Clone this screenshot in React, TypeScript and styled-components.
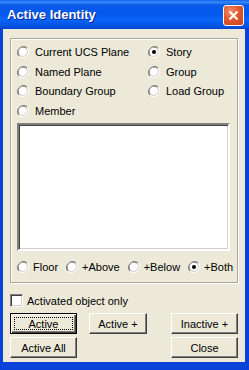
import styled, { createGlobalStyle } from "styled-components";

const Global = createGlobalStyle`
  html, body {
    margin: 0;
    padding: 0;
    background: #fff;
  }
`;

const font = `"Liberation Sans", Arial, sans-serif`;

type RadioProps = { checked?: boolean };

function RadioMark({ checked }: RadioProps) {
  return (
    <svg width="12" height="12" viewBox="0 0 12 12">
      <path d="M10.2 1.8 A6 6 0 0 0 1.8 10.2" fill="none" stroke="#808080" strokeWidth="1" />
      <path d="M9.5 2.5 A5 5 0 0 0 2.5 9.5" fill="none" stroke="#404040" strokeWidth="1" />
      <circle cx="6" cy="6" r="4.5" fill="#fff" />
      <path d="M1.8 10.2 A6 6 0 0 0 10.2 1.8" fill="none" stroke="#fff" strokeWidth="1" />
      <path d="M2.5 9.5 A5 5 0 0 0 9.5 2.5" fill="none" stroke="#d4d0c8" strokeWidth="1" />
      {checked && <circle cx="6" cy="6" r="2" fill="#000" />}
    </svg>
  );
}

function Radio({ label, checked }: { label: string; checked?: boolean }) {
  return (
    <RadioItem>
      <RadioMark checked={checked} />
      <span>{label}</span>
    </RadioItem>
  );
}

export default function App() {
  return (
    <>
      <Global />
      <Window>
        <TitleBar>
          <Title>Active Identity</Title>
          <CloseX>
            <svg width="11" height="11" viewBox="0 0 11 11">
              <path d="M1.5 1.5 L9.5 9.5 M9.5 1.5 L1.5 9.5" stroke="#fff" strokeWidth="2" />
            </svg>
          </CloseX>
        </TitleBar>
        <Frame>
          <Group>
            <OptionGrid>
              <Radio label="Current UCS Plane" />
              <Radio label="Story" checked />
              <Radio label="Named Plane" />
              <Radio label="Group" />
              <Radio label="Boundary Group" />
              <Radio label="Load Group" />
              <Radio label="Member" />
            </OptionGrid>
            <ListBox />
            <RangeRow>
              <Radio label="Floor" />
              <Radio label="+Above" />
              <Radio label="+Below" />
              <Radio label="+Both" checked />
            </RangeRow>
          </Group>
          <CheckRow>
            <CheckBox />
            <span>Activated object only</span>
          </CheckRow>
          <ButtonRow $top={6}>
            <Button $default $width={67}>
              <Focus>Active</Focus>
            </Button>
            <Button $width={58}>Active +</Button>
            <Button $width={67} $push>Inactive +</Button>
          </ButtonRow>
          <ButtonRow $top={3}>
            <Button $width={67}>Active All</Button>
            <Button $width={67} $push>Close</Button>
          </ButtonRow>
        </Frame>
      </Window>
    </>
  );
}

const Window = styled.div`
  width: 249px;
  height: 370px;
  display: flex;
  flex-direction: column;
  background: #0842d8;
  font-family: ${font};
  font-size: 11px;
  color: #000;
`;

const TitleBar = styled.div`
  height: 29px;
  flex: none;
  display: flex;
  align-items: center;
  justify-content: space-between;
  padding: 0 5px 0 7px;
  background: linear-gradient(
    to bottom,
    #0a5ff0 0px,
    #3d8cf5 2px,
    #0b5ae8 5px,
    #0358eb 12px,
    #0864f7 20px,
    #0553e0 26px,
    #0443d0 29px
  );
`;

const Title = styled.div`
  color: #fff;
  font-family: ${font};
  font-weight: bold;
  font-size: 13px;
  text-shadow: 1px 1px 0 #0a1e8c;
`;

const CloseX = styled.div`
  width: 19px;
  height: 19px;
  border: 1px solid #fff;
  border-radius: 3px;
  background: radial-gradient(circle at 35% 30%, #f0906a 0%, #e0582e 45%, #c8401c 100%);
  display: flex;
  align-items: center;
  justify-content: center;
  margin-top: 1px;
`;

const Frame = styled.div`
  flex: 1;
  margin: 0 4px 8px 3px;
  background: #ece9d8;
  display: flex;
  flex-direction: column;
  padding: 9px 7px 0 7px;
`;

const Group = styled.div`
  border: 1px solid #aca899;
  box-shadow: inset 1px 1px 0 #fff, 1px 1px 0 #fff;
  display: flex;
  flex-direction: column;
  padding: 3px 7px 0 6px;
  height: 245px;
  box-sizing: border-box;
`;

const OptionGrid = styled.div`
  display: grid;
  grid-template-columns: 131px 1fr;
  grid-auto-rows: 19.7px;
  align-items: center;
`;

const RadioItem = styled.label`
  display: flex;
  align-items: center;
  gap: 6px;
  white-space: nowrap;
  & > svg {
    flex: none;
  }
`;

const ListBox = styled.div`
  margin-top: 2px;
  height: 130px;
  box-sizing: border-box;
  background: #fff;
  border-style: solid;
  border-width: 2px;
  border-color: #808080 #fff #fff #808080;
  box-shadow: inset 1px 1px 0 #404040, inset -1px -1px 0 #d4d0c8;
`;

const RangeRow = styled.div`
  display: flex;
  align-items: center;
  height: 31px;
  gap: 8px;
  & > label {
    gap: 4px;
  }
`;

const CheckRow = styled.div`
  display: flex;
  align-items: center;
  gap: 4px;
  margin-top: 11px;
  height: 13px;
`;

const CheckBox = styled.div`
  width: 13px;
  height: 13px;
  box-sizing: border-box;
  background: #fff;
  border-style: solid;
  border-width: 1px;
  border-color: #808080 #fff #fff #808080;
  box-shadow: inset 1px 1px 0 #404040, inset -1px -1px 0 #d4d0c8;
`;

const ButtonRow = styled.div<{ $top: number }>`
  display: flex;
  gap: 12px;
  margin-top: ${(p) => p.$top}px;
`;

const Button = styled.div<{ $default?: boolean; $width: number; $push?: boolean }>`
  width: ${(p) => p.$width}px;
  height: 21px;
  box-sizing: border-box;
  margin-left: ${(p) => (p.$push ? "auto" : "0")};
  display: flex;
  align-items: center;
  justify-content: center;
  background: #ece9d8;
  font-family: ${font};
  font-size: 11px;
  border: 1px solid;
  border-color: ${(p) => (p.$default ? "#000" : "#fff #404040 #404040 #fff")};
  box-shadow: ${(p) =>
    p.$default
      ? "inset 1px 1px 0 #fff, inset -1px -1px 0 #404040, inset -2px -2px 0 #808080"
      : "inset -1px -1px 0 #808080"};
`;

const Focus = styled.span`
  display: flex;
  align-items: center;
  justify-content: center;
  width: calc(100% - 8px);
  height: calc(100% - 8px);
  border: 1px dotted #000;
`;
